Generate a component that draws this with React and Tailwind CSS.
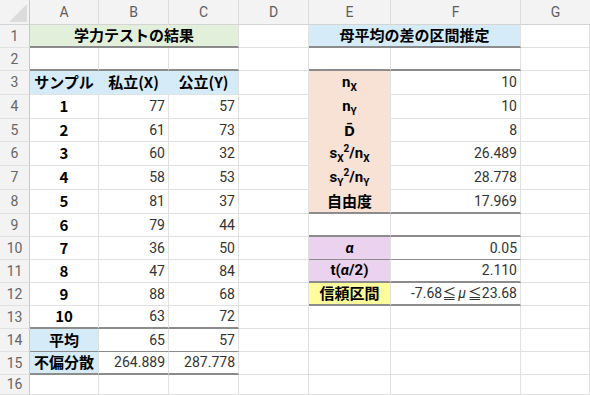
import React from "react";

const BB = {
  g: "border-b border-b-[#e1e1e1]",
  n: "border-b border-b-transparent",
  t: "border-b-2 border-b-[#8c8c8c]",
  m: "border-b border-b-[#8c8c8c]",
};
const BR = {
  g: "border-r border-r-[#e1e1e1]",
  n: "border-r border-r-transparent",
};
const AL = {
  c: "justify-center",
  r: "justify-end pr-[3px]",
  l: "justify-start pl-[3px]",
};

const FJP = "font-['Noto_Sans_CJK_JP','Noto_Sans',sans-serif]";
const FNUM = "font-['Roboto','Noto_Sans_CJK_JP',sans-serif]";
const FLAT = "font-['Noto_Sans','Noto_Sans_CJK_JP',sans-serif]";

function Cell({ children, bb = "g", br = "g", al = "c", bg = "", span = "", bold = false, num = false }) {
  const font = num && !bold ? FNUM : FJP;
  return (
    <div
      className={`flex items-center overflow-hidden whitespace-nowrap ${BB[bb]} ${BR[br]} ${AL[al]} ${bg} ${span} ${font} ${
        bold ? "font-bold text-[15px] text-black" : "text-[14px] text-[#333333]"
      }`}
    >
      {children}
    </div>
  );
}

function ColHead({ children, last }) {
  return (
    <div
      className={`flex items-center justify-center bg-[#f3f3f3] border-b border-b-[#d4d4d4] ${
        last ? "" : "border-r border-r-[#dcdcdc]"
      } text-[14px] text-[#5e5e5e] ${FNUM}`}
    >
      {children}
    </div>
  );
}

function RowHead({ n }) {
  return (
    <div
      className={`flex items-center justify-center bg-[#f3f3f3] border-r border-r-[#c8c8c8] border-b border-b-[#e1e1e1] text-[14px] text-[#666666] ${FNUM}`}
    >
      {n}
    </div>
  );
}

const GREEN = "bg-[#e2efda]";
const BLUE = "bg-[#d5ebf8]";
const PEACH = "bg-[#f8e1d5]";
const PURPLE = "bg-[#ebd2ee]";
const YELLOW = "bg-[#fdfd9c]";

const Sub = ({ c }) => <span className="text-[10px] relative top-[4px]">{c}</span>;
const Sup = ({ c }) => <span className="text-[10px] relative top-[-6px]">{c}</span>;

const data = [
  [1, 77, 57],
  [2, 61, 73],
  [3, 60, 32],
  [4, 58, 53],
  [5, 81, 37],
  [6, 79, 44],
  [7, 36, 50],
  [8, 47, 84],
  [9, 88, 68],
  [10, 63, 72],
];

const right = {
  3: [<span key="a" className={FNUM}>n<Sub c="X" /></span>, "10"],
  4: [<span key="a" className={FNUM}>n<Sub c="Y" /></span>, "10"],
  5: [<span key="a" className={FLAT}>D̄</span>, "8"],
  6: [
    <span key="a" className={FNUM}>
      s<Sub c="X" />
      <Sup c="2" />/n<Sub c="X" />
    </span>,
    "26.489",
  ],
  7: [
    <span key="a" className={FNUM}>
      s<Sub c="Y" />
      <Sup c="2" />/n<Sub c="Y" />
    </span>,
    "28.778",
  ],
  8: ["自由度", "17.969"],
};

export default function App() {
  const rows = [];
  rows.push(
    <RowHead key="h1" n={1} />,
    <Cell key="a1" span="col-span-3" bg={GREEN} bb="t" bold>
      学力テストの結果
    </Cell>,
    <Cell key="d1" />,
    <Cell key="e1" span="col-span-2" bg={BLUE} bb="t" bold>
      母平均の差の区間推定
    </Cell>,
    <Cell key="g1" />
  );
  rows.push(
    <RowHead key="h2" n={2} />,
    <Cell key="a2" bb="t" />,
    <Cell key="b2" bb="t" />,
    <Cell key="c2" bb="t" />,
    <Cell key="d2" />,
    <Cell key="e2" bb="t" />,
    <Cell key="f2" bb="t" />,
    <Cell key="g2" />
  );
  for (let r = 3; r <= 16; r++) {
    const cells = [<RowHead key={`h${r}`} n={r} />];
    if (r === 3) {
      cells.push(
        <Cell key="a" bg={BLUE} br="n" bold>サンプル</Cell>,
        <Cell key="b" bg={BLUE} br="n" bold>私立(X)</Cell>,
        <Cell key="c" bg={BLUE} bold>公立(Y)</Cell>
      );
    } else if (r >= 4 && r <= 13) {
      const [i, x, y] = data[r - 4];
      const bb = r === 13 ? "t" : "g";
      cells.push(
        <Cell key="a" bb={bb} bold num>{i}</Cell>,
        <Cell key="b" bb={bb} al="r" num>{x}</Cell>,
        <Cell key="c" bb={bb} al="r" num>{y}</Cell>
      );
    } else if (r === 14) {
      cells.push(
        <Cell key="a" bg={BLUE} bb="m" bold>平均</Cell>,
        <Cell key="b" bb="m" al="r" num>65</Cell>,
        <Cell key="c" bb="m" al="r" num>57</Cell>
      );
    } else if (r === 15) {
      cells.push(
        <Cell key="a" bg={BLUE} bb="t" bold>不偏分散</Cell>,
        <Cell key="b" bb="t" al="r" num>264.889</Cell>,
        <Cell key="c" bb="t" al="r" num>287.778</Cell>
      );
    } else {
      cells.push(<Cell key="a" />, <Cell key="b" />, <Cell key="c" />);
    }
    cells.push(<Cell key="d" />);
    if (r >= 3 && r <= 8) {
      const [lab, val] = right[r];
      const last = r === 8;
      cells.push(
        <Cell key="e" bg={PEACH} bb={last ? "t" : "n"} bold>{lab}</Cell>,
        <Cell key="f" bb={last ? "t" : "g"} al="r" num>{val}</Cell>
      );
    } else if (r === 9) {
      cells.push(<Cell key="e" bb="t" />, <Cell key="f" bb="t" />);
    } else if (r === 10) {
      cells.push(
        <Cell key="e" bg={PURPLE} bb="m" bold>
          <span className={`italic ${FNUM}`}>α</span>
        </Cell>,
        <Cell key="f" bb="m" al="r" num>0.05</Cell>
      );
    } else if (r === 11) {
      cells.push(
        <Cell key="e" bg={PURPLE} bb="t" bold>
          <span className={FNUM}>
            t(<span className="italic">α</span>/2)
          </span>
        </Cell>,
        <Cell key="f" bb="t" al="r" num>2.110</Cell>
      );
    } else if (r === 12) {
      cells.push(
        <Cell key="e" bg={YELLOW} bb="t" bold>信頼区間</Cell>,
        <Cell key="f" bb="t" al="r">
          <span className={FNUM}>-7.68</span>
          <span className={FJP}>≦</span>
          <span className={`italic mx-[2px] ${FNUM}`}>μ</span>
          <span className={FJP}>≦</span>
          <span className={FNUM}>23.68</span>
        </Cell>
      );
    } else {
      cells.push(<Cell key="e" />, <Cell key="f" />);
    }
    cells.push(<Cell key="g" />);
    rows.push(<React.Fragment key={`r${r}`}>{cells}</React.Fragment>);
  }

  return (
    <div className="w-[590px] h-[395px] overflow-hidden bg-white">
      <div className="grid grid-cols-[30px_69px_70px_70px_70px_82px_130px_69px] grid-rows-[25px_23px_23px_24px_24px_23px_24px_24px_24px_23px_23px_23px_23px_23px_23px_23px_20px]">
        <div className="relative bg-[#f3f3f3] border-r border-r-[#c8c8c8] border-b border-b-[#d4d4d4]">
          <svg className="absolute right-[2px] bottom-[2px]" width="18" height="18" viewBox="0 0 18 18">
            <polygon points="18,0 18,18 0,18" fill="#dcdcdc" />
          </svg>
        </div>
        <ColHead>A</ColHead>
        <ColHead>B</ColHead>
        <ColHead>C</ColHead>
        <ColHead>D</ColHead>
        <ColHead>E</ColHead>
        <ColHead>F</ColHead>
        <ColHead last>G</ColHead>
        {rows}
      </div>
    </div>
  );
}
